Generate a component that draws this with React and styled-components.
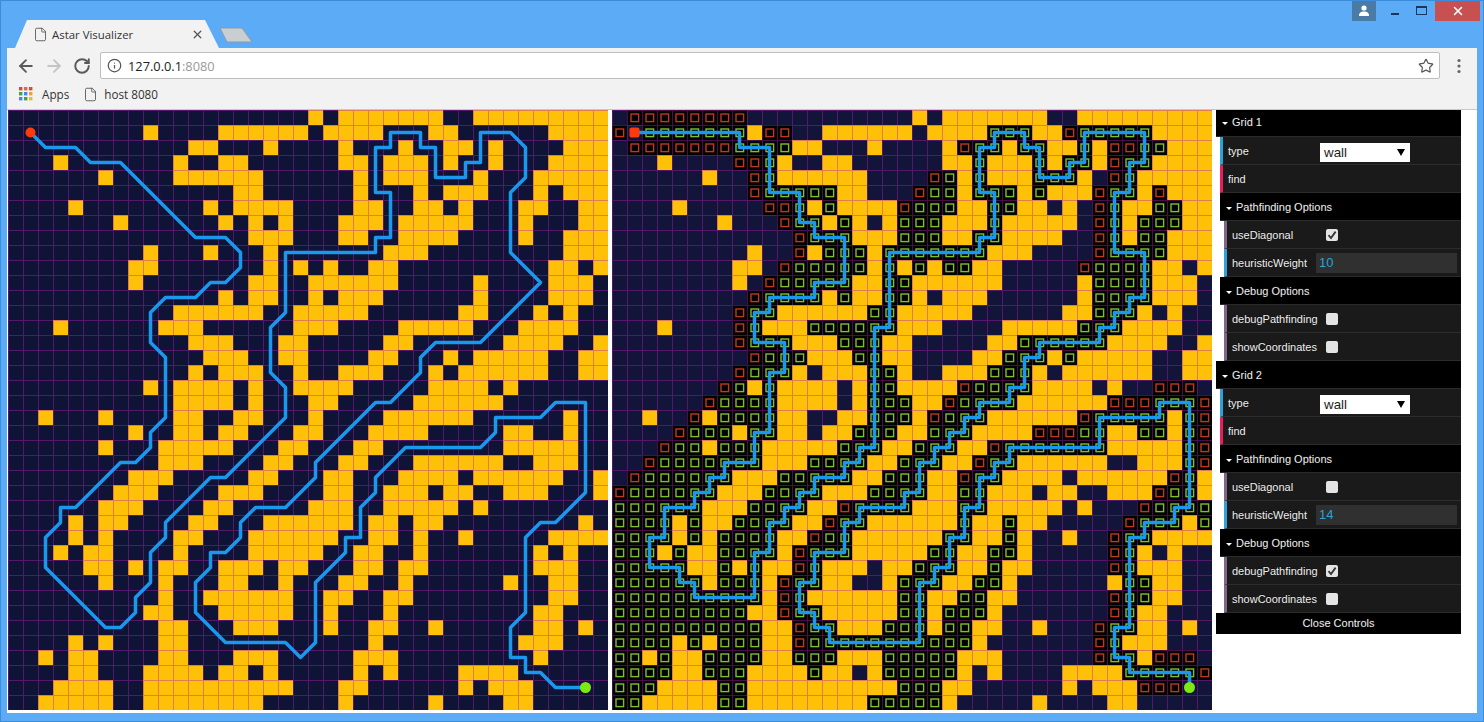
import React from "react";
import styled, { createGlobalStyle } from "styled-components";
import { ArrowLeft, ArrowRight, RotateCw, Info, Star, File, X } from "lucide-react";

const WALLS = [
  "20,22-28,31-39","9,14-19,21-24,28,29,36-39","12,13,17,22,26,29,30,32,37-39","3,11,14,15,22,23,25-27,29,32,36-39",
  "6,11-16,23,25-27,31,35-39","15,16,23,27,29-31,35,37-39","4,13,15-18,23,24,27,28,30,34,35,38,39","7,14,16,18,22-24,26-30,34,38,39",
  "16-18,22,23,26-29,34,37-39","9,13,17,25-27,37-39","8,9,17,19,21,24,25,36,37,39","8,16,17,20-25,31,36-38",
  "14,16,17,20,22-24,31,36-38","11-16,19-23,30,31,35,37","3,10-12,19-21,26-30,34-37","12-14,18,19,25,26,33-36,39",
  "13-15,18,19,24,25,29,31-35,38,39","12,14-16,19,22-24,28,30-35,38,39","9,11-14,16,19-22,28-31,33","11-14,16,20,21,27-32",
  "2,6,11,12,15,16,20,25-30,37","8,11,12,14,15,19,20,24-27,33,34,37","6,10-14,18,19,23,24,33-37","10-12,17,18,22,23,27-32,35-37",
  "8-10,16,17,21,22,26-29,31-36,39","7-9,14-16,21,22,25-27,29,30,33-35,39","6-8,13,14,20-22,25-29,31","4,6,7,12,13,17-22,24,25,27,28,38",
  "4,6,11,12,16-21,24,25,27,30,36-39","3,5,6,11,16-20,23,24,27,35,37","5,6,8,10,11,14-16,18,19,23,24,26,27,35-37","6,10,14,15,18,22,23,26,33,36,37",
  "10,13-18,21,22,25,26,36,37","9,10,14-18,21,25,35,36","10,11,15-17,21,24,25,28,35,36,38","4,6,10,11,24,34-36",
  "2,4,5,10,11,15-17,23-25,35","4,5,9-12,14,15,17,23,25,30-33","3-6,9-18,22,23,30,32-34","2-6,9-16,22,28,33,34",
];

const CLOSED = [
  "1-8","0,10,11,30","1-7,23,33,34","8,9,33","9,21,33","9,20,32,36","10,11,19,32","11,32","12,32","12,32",
  "11,31","10","9","8","8","8","9","8","7,23,36-38","6,22,33-35,39",
  "5,21,31,39","4,28-30,39","3,25,39","2,24,39","1,23,37","0,36","15,35","14,34","13,33","12,33",
  "12,33","11","11,33","11,33","12,32","12,32","32,36-38","39","35-37","",
];

const OPEN = [
  "","2-8,25-27,31-35","8-11,24,25,27,28,31,35,36","10,24,28,30,31,34,35","10,22,24,28-30,34","10-14,21,22,24-26,28,33,34",
  "12,14,20-22,25,26,33,36,37","12,13,15,19-21,25,33,35-37","13-15,19-21,24,25,33,35,36","14-16,18-24,33-36",
  "12-16,18,20,22,23,32-35","11-15,18,19,32-35","10-13,15,18,19,32-35","9,10,17,18,32-34","9,13-18,31-33",
  "9-11,15-17,27-32","10-12,16,17,26-28,30","9-11,17,18,25-27","8,10,17,18,24-27","7-10,17-19,23-26,36-38",
  "7-10,17-19,22-24,32-36,38","5-7,9,10,16-18,21-23,31,32,35,36,38","4,5,7-9,15-17,20-22,26-32,38","3-9,13-16,19-21,25,26,38",
  "2-7,11-15,18-20,24,25,38","1-6,10-13,17-20,23,24,37,38","0-5,9-12,16-19,23,24,36-39","0-3,5,8-11,15,16,23,26,35-37,39",
  "0-3,5,7-10,14,15,22,23,26,34,35","0-2,4,7-10,13-15,21,22,25,26,34","0-4,7,9,13,20-22,25,34","0-5,7-9,12,13,19-21,24,25,34,35",
  "0-9,12,19,20,23,24,34,35","0-8,12,13,19,20,22-24,34","0-9,13,14,18-20,22,23,33,34","0-3,5,7-9,13-23,33",
  "0,1,3,6-9,12-14,18-22,33,34","0-3,6-8,13,18-22,34-38","0-2,7,8,19-21","0,1,7,8,17-21",
];

const LEFT_PATH =
  "1,1 2,2 4,2 5,3 7,3 12,8 14,8 15,9 15,10 14,11 13,11 12,12 10,12 9,13 9,15 10,16 10,20 9,21 9,22 8,23 7,23 4,26 3,26 3,27 2,28 2,30 6,34 7,34 8,33 8,32 9,31 9,29 10,28 10,27 13,24 14,24 18,20 18,18 17,17 17,14 18,13 18,9 24,9 24,8 25,8 25,5 24,5 24,2 25,2 25,1 27,1 27,2 28,2 28,4 30,4 30,3 31,3 31,1 33,1 34,2 34,4 33,5 33,9 35,11 31,15 28,15 27,16 27,17 25,19 24,19 23,20 20,23 20,24 19,25 18,26 16,26 15,27 15,28 14,29 13,29 13,30 12,31 12,33 14,35 18,35 19,36 20,35 20,31 22,29 22,28 23,28 23,26 24,25 24,24 26,22 31,22 32,21 32,20 35,20 36,19 38,19 38,25 36,27 35,27 34,28 34,33 33,34 33,36 34,36 34,37 35,37 36,38 38,38";

const RIGHT_PATH =
  "1,1 8,1 8,2 10,2 10,5 12,5 12,7 13,7 13,8 15,8 15,11 13,11 13,12 10,12 10,13 9,13 9,15 11,15 11,17 10,17 10,21 9,21 9,23 7,23 7,24 6,24 6,25 5,25 5,26 3,26 3,28 2,28 2,30 4,30 4,31 5,31 5,32 9,32 9,29 10,29 10,27 11,27 11,26 12,26 12,25 13,25 13,24 15,24 15,23 16,23 16,22 17,22 17,14 18,14 18,9 24,9 24,8 25,8 25,5 24,5 24,2 25,2 25,1 27,1 27,2 28,2 28,4 30,4 30,3 31,3 31,1 35,1 35,3 34,3 34,5 33,5 33,9 35,9 35,12 34,12 34,13 33,13 33,14 32,14 32,15 28,15 28,16 27,16 27,18 26,18 26,19 24,19 24,20 23,20 23,21 22,21 22,22 21,22 21,23 20,23 20,25 19,25 19,26 16,26 16,27 15,27 15,29 13,29 13,31 12,31 12,33 13,33 13,34 14,34 14,35 20,35 20,31 21,31 21,30 22,30 22,28 23,28 23,26 24,26 24,24 25,24 25,23 26,23 26,22 32,22 32,20 36,20 36,19 38,19 38,26 37,26 37,27 35,27 35,28 34,28 34,34 33,34 33,36 34,36 34,37 38,37 38,38";

const parseRanges = (spec) =>
  spec
    ? spec.split(",").flatMap((part) => {
        const [a, b] = part.split("-").map(Number);
        if (b === undefined) return [a];
        return Array.from({ length: b - a + 1 }, (_, i) => a + i);
      })
    : [];

const CELL = 15;
const cellsOf = (specs) => specs.flatMap((spec, row) => parseRanges(spec).map((col) => [col, row]));
const wallCells = cellsOf(WALLS);
const openCells = cellsOf(OPEN);
const closedCells = cellsOf(CLOSED);
const toPixels = (path) =>
  path
    .split(" ")
    .map((p) => p.split(",").map((v) => Number(v) * CELL + 7.5).join(","))
    .join(" ");
const gridLines = Array.from({ length: 41 }, (_, i) => {
  const p = i * CELL + 0.5;
  return `M${p} 0V600M0 ${p}H600`;
}).join("");

const Global = createGlobalStyle`
  html, body { margin: 0; padding: 0; background: #5aabf5; }
  * { box-sizing: border-box; }
`;

const Frame = styled.div`
  width: 1484px;
  height: 722px;
  overflow: hidden;
  display: flex;
  flex-direction: column;
  background: #5cabf6;
  border: 1px solid #3b8ddc;
  font-family: "Open Sans", "Liberation Sans", sans-serif;
`;

const TabStrip = styled.div`
  height: 47px;
  flex: none;
  display: flex;
  align-items: flex-end;
  padding-left: 14px;
`;

const Tab = styled.div`
  width: 204px;
  height: 28px;
  display: flex;
  align-items: center;
  padding: 0 15px 0 18px;
  background: #f2f2f2;
  clip-path: polygon(0 100%, 12px 0, 190px 0, 100% 100%);
  font-size: 11.4px;
  color: #333;
`;

const TabTitle = styled.span`
  margin-left: 4px;
  flex: 1;
  white-space: nowrap;
`;

const NewTab = styled.svg`
  flex: none;
  margin: 0 0 4px 0;
`;

const WindowControls = styled.div`
  margin-left: auto;
  align-self: flex-start;
  display: flex;
  align-items: flex-start;
  height: 21px;
  margin-top: -1px;
  margin-right: 3px;
`;

const UserBadge = styled.div`
  width: 24px;
  height: 21px;
  margin-right: 5px;
  display: flex;
  align-items: center;
  justify-content: center;
  background: #4a7aa6;
`;

const WinButton = styled.div`
  width: 27px;
  height: 21px;
  display: flex;
  align-items: center;
  justify-content: center;
`;

const CloseWin = styled.div`
  width: 45px;
  height: 21px;
  display: flex;
  align-items: center;
  justify-content: center;
  background: #c75050;
  color: #fff;
`;

const Window = styled.div`
  margin: 0 6px;
  height: 665px;
  flex: none;
  display: flex;
  flex-direction: column;
  background: #fff;
`;

const Toolbar = styled.div`
  height: 37px;
  flex: none;
  display: flex;
  align-items: center;
  background: #f2f2f2;
  padding: 0 8px 2px 5px;
`;

const NavButton = styled.div`
  width: 28px;
  height: 28px;
  display: flex;
  align-items: center;
  justify-content: center;
  color: ${(p) => (p.$off ? "#c4c4c4" : "#5a5a5a")};
`;

const Omnibox = styled.div`
  width: 1340px;
  height: 27px;
  margin: 0 0 0 4px;
  padding: 0 5px 0 6px;
  display: flex;
  align-items: center;
  background: #fff;
  border: 1px solid #bdbdbd;
  border-radius: 2px;
  font-size: 12.8px;
  color: #222;
  font-family: "Open Sans", "Liberation Sans", sans-serif;
`;

const Host = styled.span`
  margin-left: 6px;
  flex: 1;
`;

const Port = styled.span`
  color: #9a9a9a;
`;

const Kebab = styled.svg`
  margin-left: 17px;
`;

const Bookmarks = styled.div`
  height: 25px;
  flex: none;
  display: flex;
  align-items: center;
  padding: 0 0 6px 12px;
  background: #f2f2f2;
  border-bottom: 1px solid #c8c8c8;
  font-size: 11.7px;
  color: #333;
`;

const BookmarkLabel = styled.span`
  margin-left: ${(p) => p.$gap}px;
  margin-right: ${(p) => p.$after || 0}px;
`;

const Content = styled.div`
  flex: 1;
  display: flex;
  align-items: flex-start;
  padding-left: 1px;
  gap: 4px;
  background: #fff;
`;

const GridSvg = styled.svg`
  display: block;
  flex: none;
`;

const Panel = styled.div`
  width: 245px;
  flex: none;
  font: 11px "Liberation Sans", Arial, sans-serif;
  color: #eee;
  text-shadow: 0 -1px 0 #111;
`;

const Indent = styled.div`
  margin-left: 4px;
`;

const Title = styled.div`
  height: ${(p) => (p.$first ? 27 : 28)}px;
  padding-bottom: ${(p) => (p.$first ? 3 : 0)}px;
  padding-left: 16px;
  display: flex;
  align-items: center;
  position: relative;
  background: #000;
  border-bottom: 1px solid #2a2a2a;
  &::before {
    content: "";
    position: absolute;
    left: 6px;
    top: 50%;
    margin-top: ${(p) => (p.$first ? -1 : 0)}px;
    border-left: 3px solid transparent;
    border-right: 3px solid transparent;
    border-top: 3px solid #fff;
  }
`;

const Row = styled.div`
  height: 28px;
  display: flex;
  align-items: center;
  padding-left: 5px;
  background: #1a1a1a;
  border-left: 3px solid ${(p) => p.$accent};
  border-bottom: 1px solid #2c2c2c;
`;

const Label = styled.span`
  flex: none;
  width: ${(p) => p.$width}px;
  white-space: nowrap;
`;

const SelectBox = styled.div`
  width: 90px;
  height: 19px;
  margin-top: 4px;
  padding: 0 4px;
  display: flex;
  align-items: center;
  justify-content: space-between;
  background: #fff;
  color: #222;
  text-shadow: none;
  font-size: 13.33px;
`;

const SelectArrow = styled.span`
  width: 0;
  height: 0;
  margin-right: 1px;
  border-left: 4px solid transparent;
  border-right: 4px solid transparent;
  border-top: 7px solid #000;
`;

const CheckBox = styled.div`
  width: 12px;
  height: 12px;
  margin-left: 10px;
  display: flex;
  align-items: center;
  justify-content: center;
  border-radius: 2px;
  background: #e4e4e4;
`;

const NumberBox = styled.div`
  width: 141px;
  height: 20px;
  padding-left: 3px;
  display: flex;
  align-items: center;
  background: #303030;
  color: #2fa1d6;
  font-size: 13px;
  text-shadow: none;
`;

const CloseBar = styled.div`
  height: 21px;
  padding-bottom: 2px;
  display: flex;
  align-items: center;
  justify-content: center;
  background: #000;
  color: #eee;
`;

const Walls = () => (
  <g fill="#ffc107">
    {wallCells.map(([c, r]) => (
      <rect key={`${c}-${r}`} x={c * CELL} y={r * CELL} width={CELL} height={CELL} />
    ))}
  </g>
);

const Marks = ({ cells, color }) => (
  <>
    <g fill="#000">
      {cells.map(([c, r]) => (
        <rect key={`${c}-${r}`} x={c * CELL} y={r * CELL} width={CELL} height={CELL} />
      ))}
    </g>
    <g fill="none" stroke={color} strokeWidth="1.4">
      {cells.map(([c, r]) => (
        <rect key={`${c}-${r}`} x={c * CELL + 4} y={r * CELL + 4} width={7.6} height={7.6} />
      ))}
    </g>
  </>
);

const Lines = () => (
  <path d={gridLines} stroke="#b020b0" strokeOpacity="0.42" strokeWidth="1" fill="none" shapeRendering="crispEdges" />
);

const Route = ({ points }) => (
  <polyline points={toPixels(points)} fill="none" stroke="#1a98ee" strokeWidth="3.5" strokeLinejoin="round" strokeLinecap="round" />
);

const GridPlain = () => (
  <GridSvg width="600" height="600" viewBox="0 0 600 600">
    <rect width="600" height="600" fill="#0f1336" />
    <Walls />
    <Lines />
    <Route points={LEFT_PATH} />
    <circle cx="22.5" cy="22.5" r="5" fill="#ff3a0a" />
    <circle cx="577.5" cy="577.5" r="5.5" fill="#7dea12" />
  </GridSvg>
);

const GridDebug = () => (
  <GridSvg width="600" height="600" viewBox="0 0 600 600">
    <rect width="600" height="600" fill="#12143a" />
    <Walls />
    <Marks cells={closedCells} color="#bd3a1c" />
    <Marks cells={openCells} color="#7fbf2a" />
    <Lines />
    <Route points={RIGHT_PATH} />
    <rect x="17.5" y="17.5" width="10" height="10" rx="2" fill="#ff3a0a" />
    <circle cx="577.5" cy="577.5" r="5.5" fill="#7dea12" />
  </GridSvg>
);

const Check = () => (
  <svg width="10" height="10" viewBox="0 0 10 10">
    <path d="M1.5 5.2 4 8 8.6 1.6" fill="none" stroke="#333" strokeWidth="1.8" />
  </svg>
);

const BlueGrey = "#806787";
const Blue = "#2fa1d6";
const Pink = "#e61d5f";

const GridFolder = ({ name, first, diagonal, weight, debug }) => (
  <>
    <Title $first={first}>{name}</Title>
    <Indent>
      <Row $accent={Blue}>
        <Label $width={92}>type</Label>
        <SelectBox>
          wall
          <SelectArrow />
        </SelectBox>
      </Row>
      <Row $accent={Pink}>
        <Label $width={92}>find</Label>
      </Row>
      <Title>Pathfinding Options</Title>
      <Indent>
        <Row $accent={BlueGrey}>
          <Label $width={84}>useDiagonal</Label>
          <CheckBox>{diagonal && <Check />}</CheckBox>
        </Row>
        <Row $accent={Blue}>
          <Label $width={84}>heuristicWeight</Label>
          <NumberBox>{weight}</NumberBox>
        </Row>
      </Indent>
      <Title>Debug Options</Title>
      <Indent>
        <Row $accent={BlueGrey}>
          <Label $width={84}>debugPathfinding</Label>
          <CheckBox>{debug && <Check />}</CheckBox>
        </Row>
        <Row $accent={BlueGrey}>
          <Label $width={84}>showCoordinates</Label>
          <CheckBox />
        </Row>
      </Indent>
    </Indent>
  </>
);

const APP_COLORS = ["#e0463a", "#e9673a", "#e0463a", "#3fa34d", "#4285f4", "#e9a23a", "#4285f4", "#3fa34d", "#f2b632"];

const AppsIcon = () => (
  <svg width="14" height="14" viewBox="0 0 14 14">
    {APP_COLORS.map((color, i) => (
      <rect key={i} x={(i % 3) * 5} y={Math.floor(i / 3) * 5} width="3.4" height="3.4" fill={color} />
    ))}
  </svg>
);

export default function App() {
  return (
    <Frame>
      <Global />
      <TabStrip>
        <Tab>
          <File size={15} strokeWidth={1.4} color="#555" />
          <TabTitle>Astar Visualizer</TabTitle>
          <X size={13} strokeWidth={2.4} color="#555" />
        </Tab>
        <NewTab width="36" height="17" viewBox="0 0 36 17">
          <path d="M1 1H23L33 15H8Z" fill="#c9ced3" stroke="#8c99a6" strokeWidth="1" />
        </NewTab>
        <WindowControls>
          <UserBadge>
            <svg width="12" height="11" viewBox="0 0 12 11">
              <circle cx="6" cy="3" r="2.6" fill="#fff" />
              <path d="M1 11C1 7.5 3 6.5 6 6.5S11 7.5 11 11Z" fill="#fff" />
            </svg>
          </UserBadge>
          <WinButton>
            <svg width="10" height="10" viewBox="0 0 10 10">
              <rect x="1" y="7" width="8" height="2" fill="#17375e" />
            </svg>
          </WinButton>
          <WinButton>
            <svg width="11" height="9" viewBox="0 0 11 9">
              <rect x="0.5" y="0.5" width="10" height="8" fill="none" stroke="#17375e" />
              <rect x="0" y="0" width="11" height="2" fill="#17375e" />
            </svg>
          </WinButton>
          <CloseWin>
            <X size={14} strokeWidth={2.6} />
          </CloseWin>
        </WindowControls>
      </TabStrip>
      <Window>
        <Toolbar>
          <NavButton><ArrowLeft size={20} strokeWidth={2.2} /></NavButton>
          <NavButton $off><ArrowRight size={20} strokeWidth={2.2} /></NavButton>
          <NavButton><RotateCw size={18} strokeWidth={2.6} /></NavButton>
          <Omnibox>
            <Info size={15} strokeWidth={2} color="#555" />
            <Host>127.0.0.1<Port>:8080</Port></Host>
            <Star size={16} strokeWidth={1.8} color="#555" />
          </Omnibox>
          <Kebab width="4" height="16" viewBox="0 0 4 16">
            <circle cx="2" cy="2.5" r="1.6" fill="#666" />
            <circle cx="2" cy="8" r="1.6" fill="#666" />
            <circle cx="2" cy="13.5" r="1.6" fill="#666" />
          </Kebab>
        </Toolbar>
        <Bookmarks>
          <AppsIcon />
          <BookmarkLabel $gap={9} $after={14}>Apps</BookmarkLabel>
          <File size={15} strokeWidth={1.4} color="#555" />
          <BookmarkLabel $gap={6}>host 8080</BookmarkLabel>
        </Bookmarks>
        <Content>
          <GridPlain />
          <GridDebug />
          <Panel>
            <GridFolder name="Grid 1" first diagonal weight="10" />
            <GridFolder name="Grid 2" weight="14" debug />
            <CloseBar>Close Controls</CloseBar>
          </Panel>
        </Content>
      </Window>
    </Frame>
  );
}
